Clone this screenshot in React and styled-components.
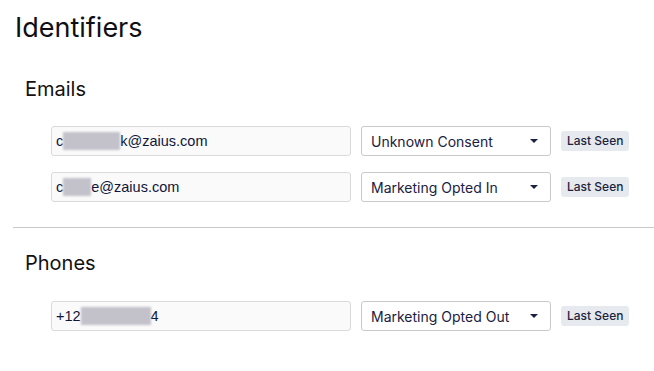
import React from "react";
import styled, { createGlobalStyle } from "styled-components";

const Global = createGlobalStyle`
  html, body { margin: 0; padding: 0; background: #ffffff; }
  body { font-family: Inter, "Noto Sans", sans-serif; color: #111111; }
`;

const Page = styled.div`
  padding: 12px 0 0 15px;
  display: flex;
  flex-direction: column;
`;

const Title = styled.h1`
  margin: 0;
  font-size: 27px;
  line-height: 32px;
  font-weight: 400;
  color: #0f0f14;
`;

const Section = styled.section`
  display: flex;
  flex-direction: column;
  margin-top: ${(p) => p.$top}px;
`;

const SectionTitle = styled.h2`
  margin: 0 0 0 10px;
  font-size: 20px;
  line-height: 24px;
  font-weight: 400;
  color: #111111;
`;

const Rows = styled.div`
  display: flex;
  flex-direction: column;
  gap: 16px;
  margin: ${(p) => p.$top}px 0 0 36px;
`;

const Row = styled.div`
  display: flex;
  align-items: center;
  gap: 10px;
`;

const Field = styled.div`
  box-sizing: border-box;
  width: 300px;
  height: 30px;
  border: 1px solid #dadada;
  border-radius: 3px;
  background: #fafafa;
  display: flex;
  align-items: center;
  padding: 0 4px;
  font-family: "Liberation Sans", Arial, sans-serif;
  font-size: 14.5px;
  color: #10163a;
  white-space: nowrap;
`;

const Redacted = styled.span`
  display: inline-block;
  width: ${(p) => p.$w}px;
  height: 18px;
  background: #c3c2cb;
  filter: blur(1px);
`;

const Select = styled.div`
  box-sizing: border-box;
  width: 190px;
  height: 30px;
  border: 1px solid #c9c9cc;
  border-radius: 3px;
  background: #ffffff;
  display: flex;
  align-items: center;
  justify-content: space-between;
  padding: 0 12px 0 9px;
  font-size: 14px;
  color: #1b2140;
`;

const Caret = styled.span`
  width: 0;
  height: 0;
  border-left: 4px solid transparent;
  border-right: 4px solid transparent;
  border-top: 4px solid #1b2140;
`;

const Badge = styled.span`
  height: 20px;
  padding: 0 6px;
  border-radius: 3px;
  background: #e6e9ee;
  color: #1d2440;
  font-size: 12px;
  line-height: 20px;
  font-weight: 500;
  margin-top: -1px;
`;

const Divider = styled.hr`
  margin: 25px 0 0 -2px;
  border: none;
  height: 1px;
  background: #c8c8c8;
`;

const Identifier = ({ before, redact, after, consent }) => (
  <Row>
    <Field>
      {before}
      <Redacted $w={redact} />
      {after}
    </Field>
    <Select>
      {consent}
      <Caret />
    </Select>
    <Badge>Last Seen</Badge>
  </Row>
);

export default function App() {
  return (
    <>
      <Global />
      <Page>
        <Title>Identifiers</Title>
        <Section $top={33}>
          <SectionTitle>Emails</SectionTitle>
          <Rows $top={25}>
            <Identifier before="c" redact={57} after="k@zaius.com" consent="Unknown Consent" />
            <Identifier before="c" redact={28} after="e@zaius.com" consent="Marketing Opted In" />
          </Rows>
        </Section>
        <Divider />
        <Section $top={23}>
          <SectionTitle>Phones</SectionTitle>
          <Rows $top={26}>
            <Identifier before="+12" redact={70} after="4" consent="Marketing Opted Out" />
          </Rows>
        </Section>
      </Page>
    </>
  );
}
